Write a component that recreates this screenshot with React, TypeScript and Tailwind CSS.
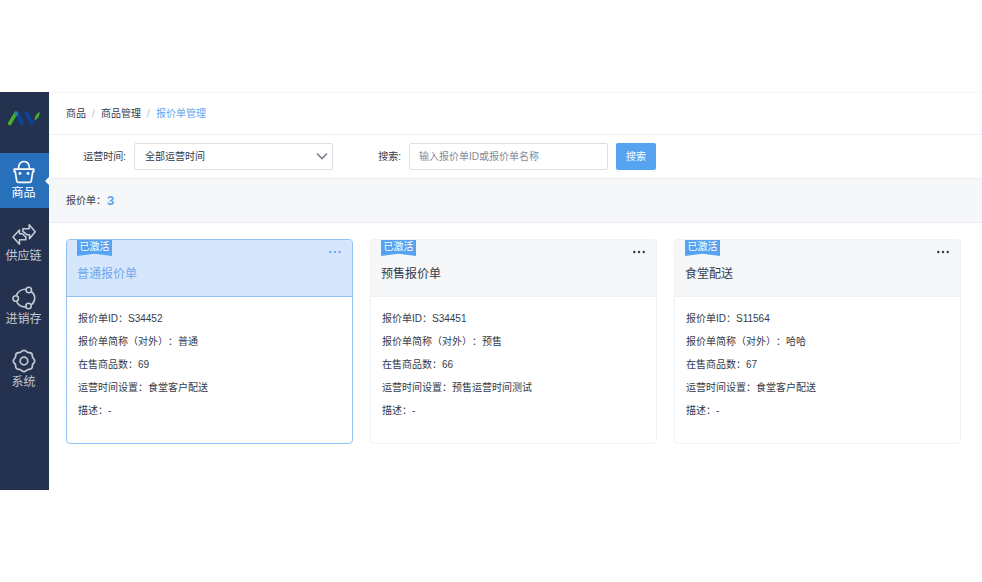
import { clsx } from "clsx";

const menus = [
  { name: "商品", icon: BasketIcon, active: true },
  { name: "供应链", icon: SupplyIcon, active: false },
  { name: "进销存", icon: StockIcon, active: false },
  { name: "系统", icon: SystemIcon, active: false },
];

const quotations = [
  { id: "S34452", name: "普通报价单", shortName: "普通", count: 69, time: "食堂客户配送", desc: "-", active: true },
  { id: "S34451", name: "预售报价单", shortName: "预售", count: 66, time: "预售运营时间测试", desc: "-", active: false },
  { id: "S11564", name: "食堂配送", shortName: "哈哈", count: 67, time: "食堂客户配送", desc: "-", active: false },
];

function Logo() {
  return (
    <svg className="w-9 h-5" viewBox="0 0 36 20" fill="none" strokeLinecap="round">
      <path d="M11 4.500 16 14M20.500 4.500 26 14" stroke="#0b4397" strokeWidth="4" />
      <path d="M9.700 4.500 3.700 14.500" stroke="#43b02e" strokeWidth="3.600" />
      <path d="M10.300 4v1.500" stroke="#2b8292" strokeWidth="3.600" />
      <path d="M33.500 3c.6 3-1.200 6.500-4.800 8.600-.2-3.600 1.400-7 4.800-8.600Z" fill="#43b02e" />
    </svg>
  );
}

function BasketIcon() {
  return (
    <svg className="w-6 h-6" viewBox="0 0 24 24" fill="none" stroke="currentColor" strokeWidth="1.700" strokeLinejoin="round">
      <path d="M2.200 9.200h19.600v2.300h-1l-1.500 9.300c-.2 1-.8 1.600-1.800 1.600h-11c-1 0-1.600-.6-1.800-1.600L3.200 11.500h-1Z" />
      <path d="M6.500 9C6.500 4.500 8.500 1.500 12 1.500S17.500 4.500 17.500 9" />
      <circle cx="8" cy="13.500" r="1.400" fill="currentColor" stroke="none" />
      <circle cx="16" cy="13.500" r="1.400" fill="currentColor" stroke="none" />
    </svg>
  );
}

function SupplyIcon() {
  return (
    <svg className="w-6 h-6" viewBox="0 0 24 24" fill="none" stroke="currentColor" strokeWidth="1.600" strokeLinejoin="round">
      <path d="M17.200 5.700v-4l6 7-5.700 7v-4h-2.700l-3.900-3.400V5.700Z" />
      <path d="M7.500 10.700V7L1 14l6.500 7.200v-4.500h6.300v-2.700l-3.600-3.300Z" />
    </svg>
  );
}

function StockIcon() {
  return (
    <svg className="w-6 h-6" viewBox="0 0 24 24" fill="none" stroke="currentColor" strokeWidth="1.600">
      <circle cx="3.700" cy="12.500" r="2.700" />
      <circle cx="16.800" cy="4" r="2.700" />
      <circle cx="16.500" cy="20" r="2.700" />
      <path d="M4.400 9.800C5.700 5.800 9.500 3 14.100 3.300M19.200 5.500c4.700 3.400 4.700 9.700.1 13.500M4.500 15.200c1.500 3.800 4.800 6 9.300 5.600" />
    </svg>
  );
}

function SystemIcon() {
  return (
    <svg className="w-6 h-6" viewBox="0 0 24 24" fill="none" stroke="currentColor" strokeWidth="1.700" strokeLinejoin="round">
      <path d="M9.700 2.300Q12 .4 14.300 2.300C15.200 3.600 16 3.800 17.300 3.600Q20.300 3.800 20.400 6.700C20.200 8 20.400 8.800 21.700 9.700Q23.600 12 21.700 14.300C20.400 15.200 20.200 16 20.400 17.300Q20.300 20.200 17.300 20.400C16 20.200 15.200 20.400 14.300 21.700Q12 23.600 9.700 21.700C8.800 20.400 8 20.200 6.700 20.400Q3.700 20.200 3.600 17.300C3.800 16 3.600 15.200 2.300 14.300Q.4 12 2.300 9.700C3.600 8.800 3.800 8 3.600 6.700Q3.700 3.800 6.700 3.600C8 3.800 8.800 3.600 9.700 2.300Z" />
      <circle cx="12" cy="12" r="3.800" />
    </svg>
  );
}

function Sidebar() {
  return (
    <aside className="w-[49px] shrink-0 bg-[#243250]">
      <div className="h-[61px] flex items-center justify-center pr-[2px] pb-2">
        <Logo />
      </div>
      <nav className="flex flex-col gap-2">
        {menus.map((menu) => (
          <a
            key={menu.name}
            href="#"
            className={clsx(
              "relative h-[55px] flex flex-col items-center justify-center gap-px pr-[2px] pb-px text-xs leading-4",
              menu.active ? "bg-[#2870b9] text-white" : "text-[#c3c9d3]"
            )}
          >
            <menu.icon />
            <span>{menu.name}</span>
            {menu.active && (
              <span className="absolute right-0 top-1/2 -translate-y-1/2 border-y-4 border-r-4 border-y-transparent border-r-white" />
            )}
          </a>
        ))}
      </nav>
    </aside>
  );
}

function Breadcrumb() {
  return (
    <div className="h-[43px] flex items-center gap-1 pl-[17px] border-y border-t-[#f5f6f7] border-b-[#edf1f5]">
      <a href="#">商品</a>
      <span className="w-[7px] text-center text-[#b9bec6]">/</span>
      <a href="#">商品管理</a>
      <span className="w-[7px] text-center text-[#b9bec6]">/</span>
      <a href="#" className="text-[#5fa5ee]">报价单管理</a>
    </div>
  );
}

function Filter() {
  return (
    <form className="h-[43px] flex items-center gap-2 pl-[17px]">
      <label htmlFor="time" className="w-[60px] text-right">运营时间:</label>
      <div className="relative w-[199px]">
        <select id="time" className="block w-full h-[27px] appearance-none rounded-xs border border-[#dcdfe4] bg-white pl-[10px] pr-6 outline-none">
          <option>全部运营时间</option>
        </select>
        <svg className="absolute right-[5px] top-[7px] w-3 h-3 pointer-events-none" viewBox="0 0 12 12" fill="none" stroke="#7a828e" strokeWidth="1.700">
          <path d="M1 3.500 6 8.500l5-5" />
        </svg>
      </div>
      <label htmlFor="search" className="w-[60px] text-right">搜索:</label>
      <input
        id="search"
        type="text"
        placeholder="输入报价单ID或报价单名称"
        className="w-[199px] h-[27px] rounded-xs border border-[#dcdfe4] bg-white px-[9px] outline-none placeholder:text-[#858a96]"
      />
      <button type="submit" className="w-10 h-[27px] rounded-xs bg-[#56a3f2] text-white">搜索</button>
    </form>
  );
}

function QuotationCard({ quotation }: { quotation: (typeof quotations)[number] }) {
  return (
    <section
      className={clsx(
        "rounded-sm border bg-white",
        quotation.active ? "border-[#92c2f4]" : "border-[#f0f1f3]"
      )}
    >
      <div
        className={clsx(
          "h-[57px] flex items-start justify-between rounded-t-[3px] border-b px-[10px]",
          quotation.active ? "bg-[#d6e7fd] border-b-[#92c2f4] text-[#70a8ee]" : "bg-[#f6f7f9] border-b-[#f0f1f3] text-[#333b4b]"
        )}
      >
        <div>
          <div className="w-[35px] h-4 bg-[#56a3f2] text-center leading-[14px] text-white [clip-path:polygon(0_0,100%_0,100%_100%,50%_86%,0_100%)]">
            已激活
          </div>
          <h2 className="mt-[10px] text-xs leading-4">{quotation.name}</h2>
        </div>
        <button type="button" aria-label="更多" className="mt-[10px] px-px">
          <svg className="w-3 h-1" viewBox="0 0 12 4" fill="currentColor">
            <circle cx="1.300" cy="2" r="1.200" />
            <circle cx="6" cy="2" r="1.200" />
            <circle cx="10.700" cy="2" r="1.200" />
          </svg>
        </button>
      </div>
      <div className="px-[11px] pt-[10px] pb-[21px] leading-[23px]">
        <p>报价单ID：{quotation.id}</p>
        <p>报价单简称（对外）：{quotation.shortName}</p>
        <p>在售商品数：{quotation.count}</p>
        <p>运营时间设置：{quotation.time}</p>
        <p>描述：{quotation.desc}</p>
      </div>
    </section>
  );
}

export default function App() {
  return (
    <div className="bg-white pt-[92px] font-['Liberation_Sans','Noto_Sans_CJK_SC',sans-serif] text-[10px] text-[#333b4b] [text-spacing-trim:space-all]">
      <div className="flex">
        <Sidebar />
        <main className="flex-1 min-w-0">
          <Breadcrumb />
          <Filter />
          <div className="h-[45px] flex items-center gap-px pl-[17px] bg-[#f6f7f9] border-y border-[#eceef1]">
            <span>报价单：</span>
            <span className="text-[13px] leading-4 font-bold text-[#5fa5ee]">{quotations.length}</span>
          </div>
          <div className="grid grid-cols-3 gap-[17px] pt-4 pl-[17px] pr-[21px] pb-[46px]">
            {quotations.map((quotation) => (
              <QuotationCard key={quotation.id} quotation={quotation} />
            ))}
          </div>
        </main>
      </div>
    </div>
  );
}
